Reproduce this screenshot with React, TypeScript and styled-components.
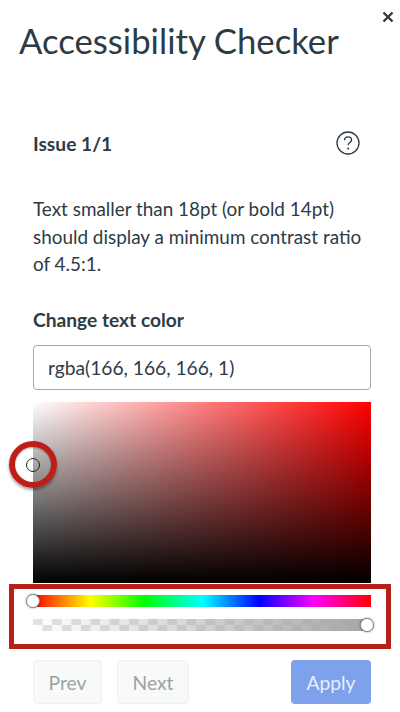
import React from "react";
import styled, { createGlobalStyle } from "styled-components";

const Global = createGlobalStyle`
  html, body { margin: 0; padding: 0; background: #fff; }
  * { box-sizing: border-box; }
  body { font-family: Lato, "Open Sans", sans-serif; color: #2d3b45; }
`;

const Panel = styled.div`
  position: relative;
  width: 400px;
  height: 712px;
  overflow: hidden;
  background: #fff;
`;

const CloseRow = styled.div`
  display: flex;
  justify-content: flex-end;
  height: 22px;
  padding: 11px 6px 0 0;
`;

const Title = styled.h1`
  margin: 0;
  padding-left: 19px;
  font-size: 34.7px;
  line-height: 38px;
  font-weight: 400;
  color: #2d3b45;
`;

const Body = styled.div`
  display: flex;
  flex-direction: column;
  padding: 0 29px 0 33px;
`;

const IssueRow = styled.div`
  display: flex;
  align-items: center;
  justify-content: space-between;
  margin-top: 70px;
  height: 26px;
  padding-right: 11px;
`;

const IssueLabel = styled.span`
  font-size: 19.2px;
  font-weight: 700;
`;

const Message = styled.p`
  margin: 39px 0 0;
  font-size: 18.9px;
  line-height: 27.5px;
`;

const FieldLabel = styled.label`
  display: block;
  margin-top: 30.5px;
  font-size: 19.2px;
  line-height: 24px;
  font-weight: 700;
`;

const ColorInput = styled.input`
  display: block;
  width: 338px;
  height: 45px;
  margin-top: 13px;
  padding: 0 14px;
  border: 1px solid #a5a9ac;
  border-radius: 4px;
  background: #fff;
  font: 400 19.2px Lato, sans-serif;
  color: #2d3b45;
  outline: none;
`;

const Saturation = styled.div`
  position: relative;
  width: 338px;
  height: 181px;
  margin-top: 12px;
  background:
    linear-gradient(to top, #000, rgba(0, 0, 0, 0)),
    linear-gradient(to right, #fff, #f00);
`;

const Picker = styled.span`
  position: absolute;
  left: -7px;
  top: 56px;
  width: 14px;
  height: 14px;
  border-radius: 50%;
  border: 1.5px solid #222;
`;

const Slider = styled.div<{ $top: number }>`
  position: relative;
  width: 338px;
  height: 12px;
  margin-top: ${(p) => p.$top}px;
`;

const HueTrack = styled(Slider)`
  background: linear-gradient(
    to right,
    #f00 0%,
    #ff0 17%,
    #0f0 33%,
    #0ff 50%,
    #00f 67%,
    #f0f 83%,
    #f00 100%
  );
`;

const AlphaTrack = styled(Slider)`
  background:
    linear-gradient(to right, rgba(166, 166, 166, 0), rgba(166, 166, 166, 1)),
    repeating-conic-gradient(#e2e2e2 0 25%, #fff 0 50%) 9.6px 0 / 19.2px 12px;
`;

const Thumb = styled.span<{ $end?: boolean }>`
  position: absolute;
  top: -1px;
  ${(p) => (p.$end ? "right: -3px;" : "left: -7px;")}
  width: 14px;
  height: 14px;
  border-radius: 50%;
  background: #fff;
  border: 1px solid #8a8a8a;
  box-shadow: 0 0 2px rgba(0, 0, 0, 0.5);
`;

const Actions = styled.div`
  display: flex;
  align-items: center;
  gap: 15px;
  width: 338px;
  margin-top: 29px;
`;

const NavButton = styled.button<{ $w: number }>`
  width: ${(p) => p.$w}px;
  height: 44px;
  padding: 0;
  border: 1px solid #eef0f1;
  border-radius: 4px;
  background: #f8f9f9;
  font: 400 19.3px Lato, sans-serif;
  color: #9ba2a7;
`;

const ApplyButton = styled.button`
  width: 80px;
  height: 44px;
  margin-left: auto;
  padding: 0;
  border: none;
  border-radius: 4px;
  background: #7ea1ec;
  font: 400 19.3px Lato, sans-serif;
  color: #e9effc;
`;

const RingMark = styled.div`
  position: absolute;
  left: 9px;
  top: 441px;
  width: 48px;
  height: 47px;
  border: 6px solid #bd1f18;
  border-radius: 50%;
  box-shadow: 0 2px 3px rgba(0, 0, 0, 0.4), inset 0 1px 2px rgba(0, 0, 0, 0.3);
  pointer-events: none;
`;

const BoxMark = styled.div`
  position: absolute;
  left: 9px;
  top: 584px;
  width: 382px;
  height: 65px;
  border: 5.5px solid #b5221a;
  pointer-events: none;
`;

const IconSvg = styled.svg`
  display: block;
`;

export default function App() {
  return (
    <Panel>
      <Global />
      <CloseRow>
        <IconSvg width="12" height="12" viewBox="0 0 12 12" aria-label="Close">
          <path d="M1.5 1.5 10.5 10.5M10.5 1.5 1.5 10.5" stroke="#2d3b45" strokeWidth="2.4" fill="none" />
        </IconSvg>
      </CloseRow>
      <Title>Accessibility Checker</Title>
      <Body>
        <IssueRow>
          <IssueLabel>Issue 1/1</IssueLabel>
          <IconSvg width="24" height="24" viewBox="0 0 24 24" aria-label="Help">
            <circle cx="12" cy="12" r="11" fill="none" stroke="#2d3b45" strokeWidth="1.3" />
            <path
              d="M8.6 9.2c0-2 1.5-3.3 3.5-3.3 2 0 3.4 1.2 3.4 3 0 2.600-3.300 2.700-3.300 5.300"
              fill="none"
              stroke="#2d3b45"
              strokeWidth="1.4"
            />
            <circle cx="12.200" cy="17.500" r="1" fill="#2d3b45" />
          </IconSvg>
        </IssueRow>
        <Message>
          Text smaller than 18pt (or bold 14pt) should display a minimum contrast ratio of 4.5:1.
        </Message>
        <FieldLabel htmlFor="color">Change text color</FieldLabel>
        <ColorInput id="color" readOnly value="rgba(166, 166, 166, 1)" />
        <Saturation>
          <Picker />
        </Saturation>
        <HueTrack $top={12}>
          <Thumb />
        </HueTrack>
        <AlphaTrack $top={12}>
          <Thumb $end />
        </AlphaTrack>
        <Actions>
          <NavButton $w={69}>Prev</NavButton>
          <NavButton $w={72}>Next</NavButton>
          <ApplyButton>Apply</ApplyButton>
        </Actions>
      </Body>
      <RingMark />
      <BoxMark />
    </Panel>
  );
}
